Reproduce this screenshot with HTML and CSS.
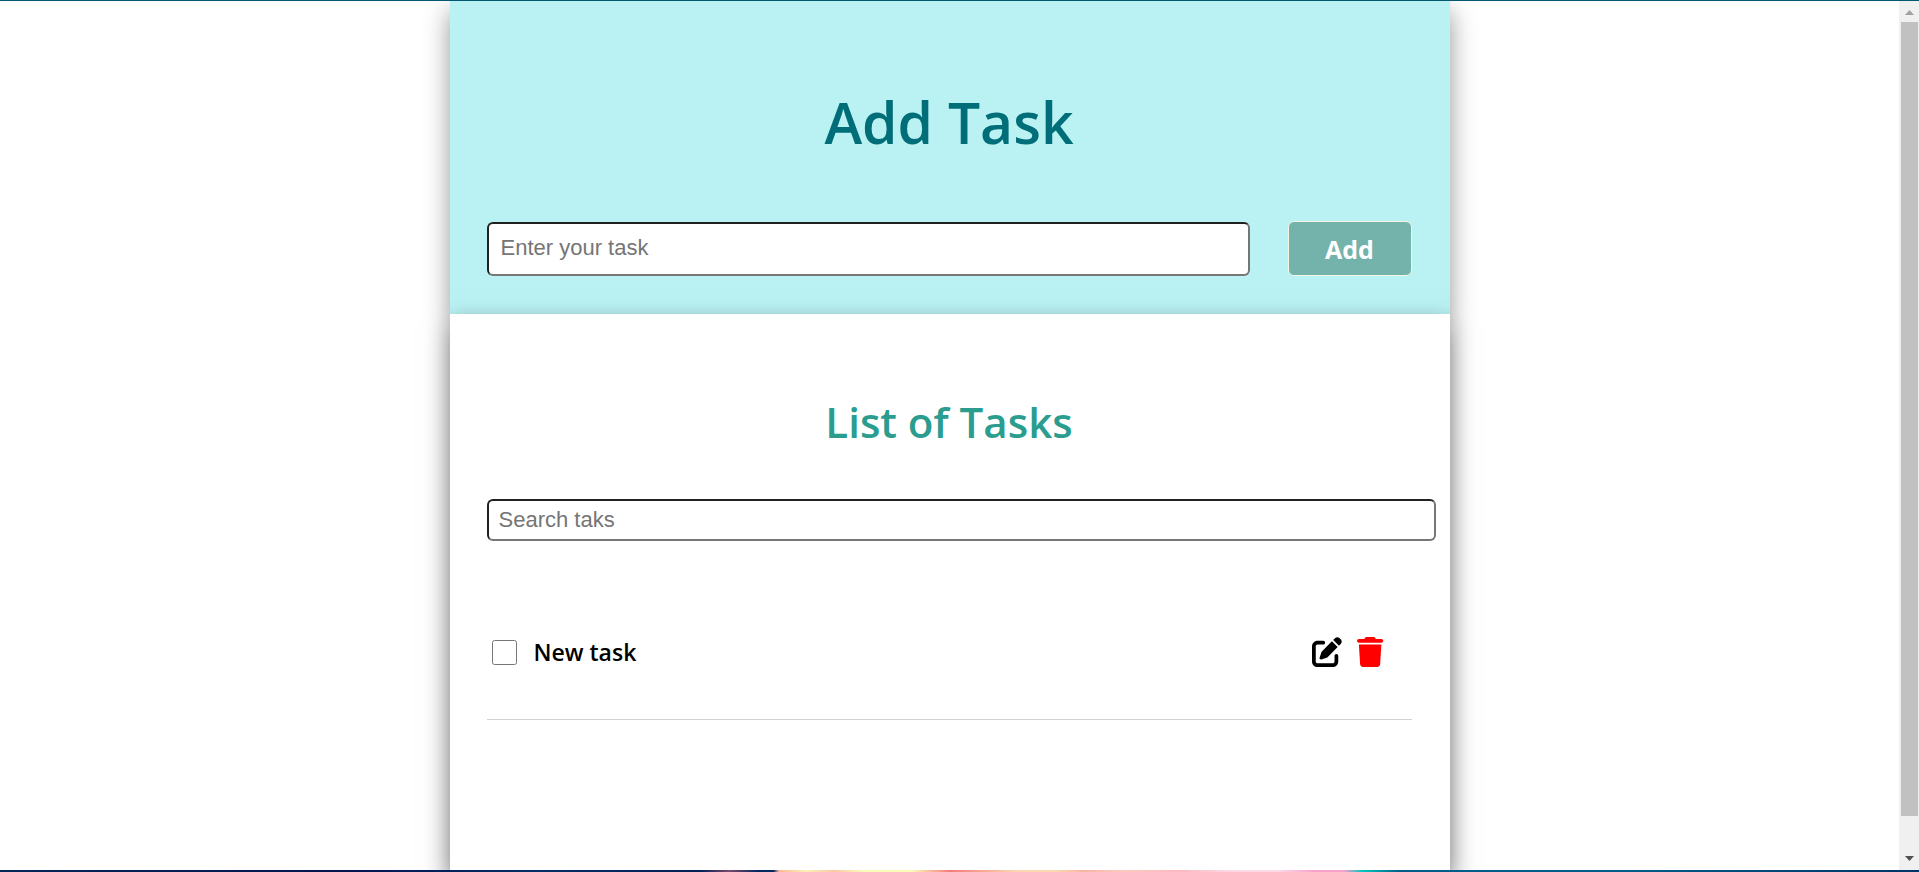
FILE: index.html
```html
<!DOCTYPE html>
<html lang="en">
<head>
<meta charset="utf-8">
<title>Add Task</title>
<link rel="stylesheet" href="styles.css">
</head>
<body>
<div class="viewport">
  <main class="page">
    <div class="app">
      <header class="add">
        <h1 class="add-title">Add Task</h1>
        <form class="add-form">
          <input class="field add-field" type="text" placeholder="Enter your task" aria-label="Enter your task">
          <button class="add-button" type="button">Add</button>
        </form>
      </header>
      <section class="list">
        <h2 class="list-title">List of Tasks</h2>
        <input class="field search-field" type="text" placeholder="Search taks" aria-label="Search tasks">
        <ul class="tasks">
          <li class="task">
            <input class="task-check" type="checkbox" id="task-1">
            <label class="task-name" for="task-1">New task</label>
            <button class="icon-button" type="button" aria-label="Edit">
              <svg class="icon" viewBox="0 0 512 512"><path d="M471.6 21.7c-21.9-21.9-57.3-21.9-79.2 0L362.3 51.7l97.9 97.9 30.1-30.1c21.9-21.9 21.9-57.3 0-79.2L471.6 21.7zm-299.2 220c-6.1 6.1-10.8 13.6-13.5 21.9l-29.6 88.8c-2.9 8.6-.6 18.1 5.8 24.6s15.9 8.7 24.6 5.8l88.8-29.6c8.2-2.7 15.7-7.4 21.9-13.5L437.7 172.3 339.7 74.3 172.4 241.7zM96 64C43 64 0 107 0 160V416c0 53 43 96 96 96H352c53 0 96-43 96-96V320c0-17.7-14.3-32-32-32s-32 14.3-32 32v96c0 17.7-14.3 32-32 32H96c-17.7 0-32-14.3-32-32V160c0-17.7 14.3-32 32-32h96c17.7 0 32-14.3 32-32s-14.3-32-32-32H96z"/></svg>
            </button>
            <button class="icon-button delete" type="button" aria-label="Delete">
              <svg class="icon" viewBox="0 0 448 512"><path d="M135.2 17.7L128 32H32C14.3 32 0 46.3 0 64S14.3 96 32 96H416c17.7 0 32-14.3 32-32s-14.3-32-32-32H320l-7.2-14.3C307.4 6.8 296.3 0 284.2 0H163.8c-12.1 0-23.2 6.8-28.6 17.7zM416 128H32L53.2 467c1.6 25.3 22.6 45 47.9 45H346.9c25.3 0 46.3-19.7 47.9-45L416 128z"/></svg>
            </button>
          </li>
        </ul>
      </section>
    </div>
  </main>
  <div class="scrollbar" aria-hidden="true">
    <svg class="arrow up" viewBox="0 0 9 5"><path d="M0 5L4.5 0L9 5z"/></svg>
    <div class="track"><div class="thumb"></div></div>
    <svg class="arrow" viewBox="0 0 9 5"><path d="M0 0L4.5 5L9 0z"/></svg>
  </div>
</div>
</body>
</html>
```

FILE: styles.css
```css
* {
  box-sizing: border-box;
}

body {
  margin: 0;
  height: 100vh;
  display: flex;
  flex-direction: column;
  overflow: hidden;
  background: #fff;
  font-family: "Segoe UI", "Open Sans", sans-serif;
}

body::before {
  content: "";
  flex: none;
  height: 1px;
  background: #00596f;
}

body::after {
  content: "";
  flex: none;
  height: 2px;
  background: linear-gradient(90deg, #002658 0%, #001450 18%, #002e66 28%, #001f56 36.5%, #7a4a6c 38%, #002860 39.5%, #002860 40.3%, #ffb896 40.6%, #fff0b4 42%, #f9c9a4 43.5%, #fafcb8 45%, #fcfcb8 47.5%, #f47c7c 49.5%, #fcd8b0 53%, #fcd8b0 55%, #f8b4a4 56.5%, #fccac0 58.5%, #fcb8c0 61.5%, #fcd8e4 64%, #fcdce8 66.5%, #f8a0cc 68.5%, #f8a0cc 70%, #00c8c0 71%, #005c88 73%, #005c88 85%, #003468 100%);
}

.viewport {
  flex: 1;
  min-height: 0;
  display: flex;
}

.page {
  flex: 1;
  overflow: hidden;
}

.app {
  min-height: 100%;
  max-width: 1000px;
  margin: 0 auto;
  display: flex;
  flex-direction: column;
}

.add,
.list {
  padding: 37px 38px 38px 37px;
}

.add {
  background: #baf2f3;
  box-shadow: 0 10px 24px rgba(0, 0, 0, 0.42);
}

.add-title {
  margin: 43px 0 58px;
  font-size: 57px;
  line-height: 82px;
  font-weight: 600;
  text-align: center;
  color: #006e78;
}

.add-form {
  display: flex;
  align-items: flex-end;
  gap: 38px;
}

.field {
  border: 2px inset #767676;
  border-radius: 6px;
  background: #fff;
  font-family: Arial, "Liberation Sans", sans-serif;
  font-size: 22px;
  outline: none;
}

.field::placeholder {
  color: #757575;
}

.add-field {
  flex: 1;
  min-width: 0;
  height: 54px;
  padding: 0 12px 2px;
}

.add-button {
  width: 124px;
  height: 55px;
  border: 1px solid #f2f7e4;
  border-radius: 6px;
  background: #74b3ac;
  color: #fff;
  font-family: inherit;
  font-size: 25px;
  font-weight: 700;
}

.list {
  flex: 1;
  background: #fff;
  box-shadow: 0 12px 24px rgba(0, 0, 0, 0.6);
}

.list-title {
  margin: 41px 0 47px;
  font-size: 42px;
  line-height: 60px;
  font-weight: 600;
  text-align: center;
  color: #2a9d8f;
}

.search-field {
  display: block;
  box-sizing: content-box;
  width: 100%;
  height: 38px;
  padding: 0 10px;
}

.tasks {
  margin: 54px 0 0;
  padding: 0;
  list-style: none;
}

.task {
  display: flex;
  align-items: center;
  height: 125px;
  padding: 0 28px 10px 5px;
  border-bottom: 1px solid #d2d2d2;
}

.task-check {
  width: 25px;
  height: 25px;
  margin: 0 17px 0 0;
}

.task-name {
  flex: 1;
  font-size: 23px;
  font-weight: 600;
}

.icon-button {
  padding: 0;
  border: 0;
  background: none;
  color: #000;
}

.delete {
  margin-left: 15px;
  color: #f00;
}

.icon {
  display: block;
  height: 30px;
  fill: currentColor;
}

.scrollbar {
  width: 20px;
  display: flex;
  flex-direction: column;
  align-items: center;
  gap: 7px;
  padding: 9px 1px 9px 2px;
  background: #f0f0f0;
}

.arrow {
  flex: none;
  width: 9px;
  height: 5px;
  fill: #505050;
}

.up {
  fill: #a0a0a0;
}

.track {
  flex: 1;
  align-self: stretch;
}

.thumb {
  height: 96%;
  background: #c1c1c1;
}
```
